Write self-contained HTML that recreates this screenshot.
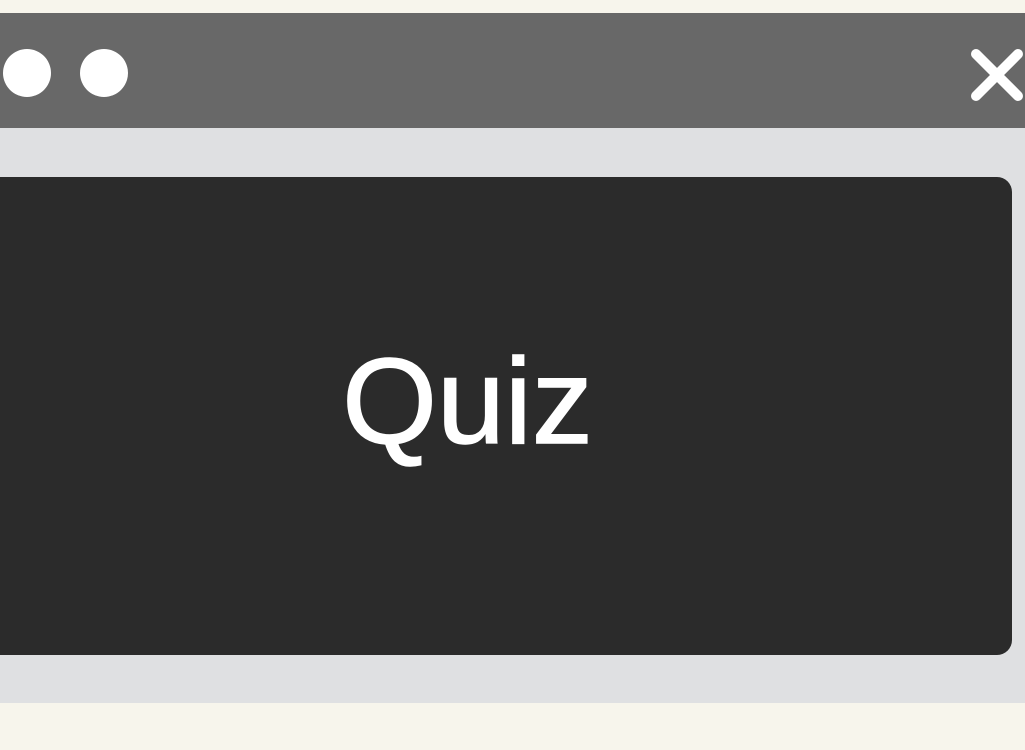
<!DOCTYPE html>
<html><head><style>
html,body{margin:0;padding:0}
body{width:1025px;height:750px;background:#f7f5ec;position:relative;overflow:hidden;font-family:"Liberation Sans",sans-serif}
.bar{position:absolute;left:0;top:13px;width:1025px;height:115px;background:#686868}
.panel{position:absolute;left:0;top:128px;width:1025px;height:575px;background:#dfe0e2}
.dot{position:absolute;width:48px;height:48px;border-radius:50%;background:#fff;top:49px}
.box{position:absolute;left:-20px;top:177px;width:1032px;height:478px;background:#2b2b2b;border-radius:15px}
.t{position:absolute;left:0;width:935px;top:336px;text-align:center;color:#fff;font-size:122px;line-height:130px;-webkit-text-stroke:1.5px #fff}
</style></head><body>
<div class="bar"></div>
<div class="dot" style="left:3px"></div>
<div class="dot" style="left:80px"></div>
<svg style="position:absolute;left:970px;top:48px" width="54" height="54" viewBox="0 0 54 54"><path d="M6 6L48 48M48 6L6 48" stroke="#fff" stroke-width="10" stroke-linecap="round"/></svg>
<div class="panel"></div>
<div class="box"></div>
<div class="t">Quiz</div>
</body></html>
